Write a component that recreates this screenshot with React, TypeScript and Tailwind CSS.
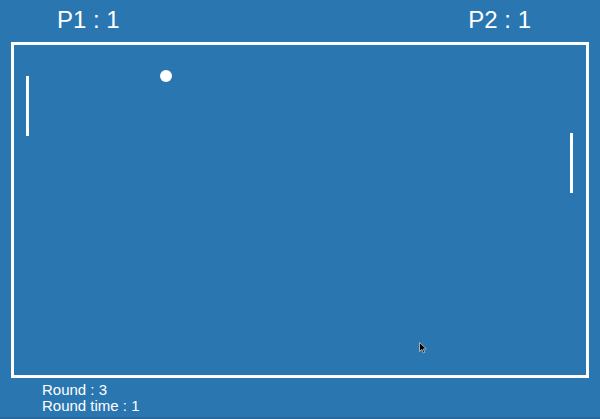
export default function App() {
  return (
    <div
      className="w-[600px] h-[419px] bg-[#2a76b0] overflow-hidden text-white border-b-2 border-[#2569a0]"
      style={{ fontFamily: '"Liberation Sans", Arial, sans-serif' }}
    >
      {/* Scores */}
      <div className="h-[42px] flex justify-between items-start pl-[57px] pr-[69px] pt-[5px] text-[24px] leading-[30px]">
        <span>P1 : 1</span>
        <span>P2 : 1</span>
      </div>

      {/* Court */}
      <div className="relative ml-[11px] w-[578px] h-[336px] border-[3px] border-white">
        <div className="absolute left-[12px] top-[31px] w-[3px] h-[60px] bg-white" />
        <div className="absolute right-[13px] top-[88px] w-[3px] h-[60px] bg-white" />
        <div className="absolute left-[146px] top-[25px] w-[12px] h-[12px] rounded-full bg-white" />
        <svg className="absolute left-[405px] top-[297px]" width="8" height="12" viewBox="0 0 8 12">
          <path d="M0.5 0.5 L0.5 9.5 L2.8 7.4 L4.4 11 L5.8 10.4 L4.3 6.9 L7.3 6.9 Z" fill="#000" stroke="#ccc" strokeWidth="0.8" />
        </svg>
      </div>

      {/* Round info */}
      <div className="flex flex-col pl-[42px] pt-[4px] text-[15px] leading-[16px]">
        <span>Round : 3</span>
        <span>Round time : 1</span>
      </div>
    </div>
  )
}
